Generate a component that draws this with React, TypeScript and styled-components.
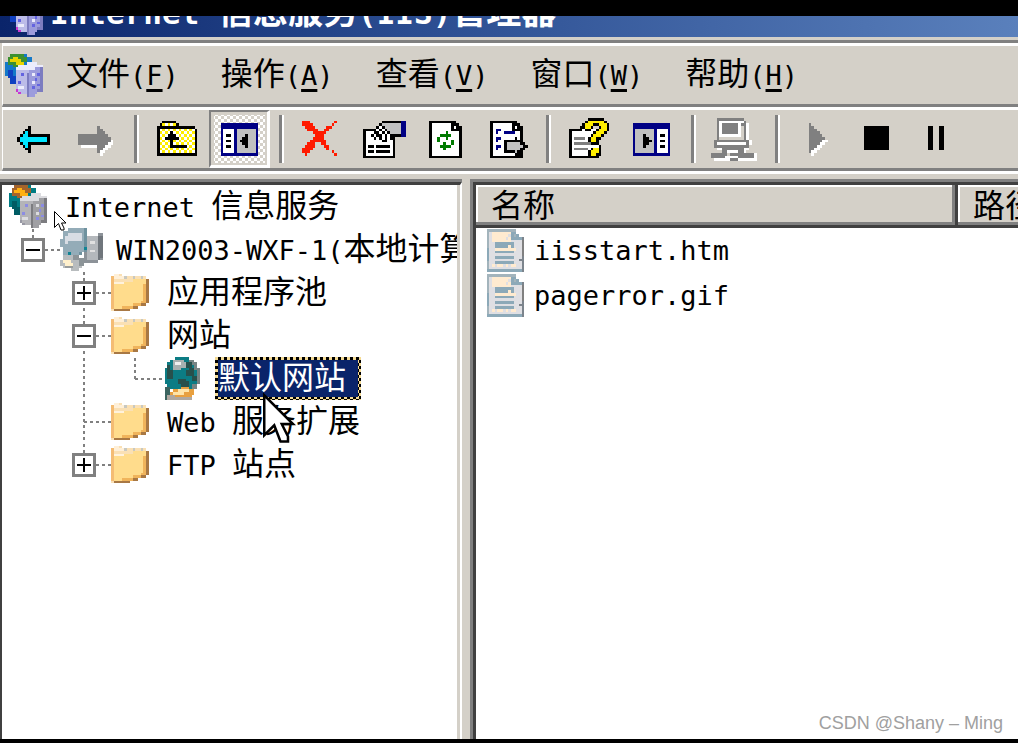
import React from 'react';
import styled, { createGlobalStyle, css } from 'styled-components';

const FACE = '#d4d0c8';
const SHADOW = '#808080';
const DARK = '#404040';
const HAN = '"Noto Sans CJK SC", sans-serif';
const MONO = '"DejaVu Sans Mono", monospace';

const GlobalStyle = createGlobalStyle`
  * { box-sizing: border-box; }
  body { margin: 0; background: #000; color: #000; }
  button { appearance: none; background: none; border: 0; padding: 0; margin: 0; color: inherit; font: inherit; }
`;

/* ---------- drawings ---------- */

const PALETTE: Record<string, string> = {
  K: '#000000', W: '#ffffff', G: '#c0c0c0', g: '#808080', C: '#00e5ff', Y: '#ffee00',
  B: '#000084', R: '#ff1a00', E: '#007a00', b: '#a3b4bc', c: '#ffebd0', l: '#dfdfe3',
  t: '#8ca9b8', d: '#7c848c',
};

type PixelsProps = { rows: string[]; x?: number; y?: number };

const Drawing = styled.svg`
  display: block;
  flex: none;
  width: 43px;
  height: 43px;
  overflow: visible;
`;

const Pixels = ({ rows, x = 0, y = 0 }: PixelsProps) => {
  const runs: React.ReactNode[] = [];
  rows.forEach((row, r) => {
    let c = 0;
    while (c < row.length) {
      let end = c + 1;
      while (end < row.length && row[end] === row[c]) end += 1;
      if (PALETTE[row[c]]) {
        runs.push(<rect key={`${r}-${c}`} x={x + c} y={y + r} width={end - c} height={1} fill={PALETTE[row[c]]} />);
      }
      c = end;
    }
  });
  return (
    <Drawing viewBox="0 0 16 16" shapeRendering="crispEdges" aria-hidden="true">
      {runs}
    </Drawing>
  );
};

const BACK = [
  '....K', '...KK', '..KCK', '.KCCKKKKKKKK', 'KCCCCCCCCCCK',
  'KCCCCCCCCCCK', '.KCCKKKKKKKK', '..KCK', '...KK', '....K',
];
const FORWARD = [
  '.......g', '.......gg', '.......ggg', 'ggggggggggg', 'gggggggggggg', 'ggggggggggggW',
  'gggggggggggWW', '.WWWWWWgggWW', '.......ggWW', '.......gWW', '........W',
];
const FOLDER_UP = [
  '..KKKKK', '.KYWYWYK', 'KKKKKKKKKKKKKK', 'KWYWYWYWYWYWYWK', 'KYWYWKWYWYWYWYK', 'KWYWKKKWYWYWYWK',
  'KYWKKKKKWYWYWYK', 'KWYWYKYWYWYWYWK', 'KYWYWKWYWYWYWYK', 'KWYWYKKKKKKWYWK', 'KYWYWYWYWYWYWYK',
  'KWYWYWYWYWYWYWK', 'KKKKKKKKKKKKKKK',
];
const PANE_LEFT = [
  'BBBBBBBBBBBBBB', 'BBBBBBBBBBBBBB', 'BWWWWBGGGGGGGB', 'BWWWWBGGGGGGGB', 'BWKKWBGGGKGGGB', 'BWWWWBGGKKGGGB',
  'BWKKWBGKKKGGGB', 'BWWWWBGGKKGGGB', 'BWKKWBGGGKGGGB', 'BWWWWBGGGGGGGB', 'BWWWWBGGGGGGGB', 'BBBBBBBBBBBBBB',
];
const PANE_RIGHT = [
  'BBBBBBBBBBBBBB', 'BBBBBBBBBBBBBB', 'BGGGGGGGBWWWWB', 'BGGGGGGGBWWWWB', 'BGGGKGGGBWKKWB', 'BGGGKKGGBWWWWB',
  'BGGGKKKGBWKKWB', 'BGGGKKGGBWWWWB', 'BGGGKGGGBWKKWB', 'BGGGGGGGBWWWWB', 'BGGGGGGGBWWWWB', 'BBBBBBBBBBBBBB',
];
const DELETE = [
  'RRR.........R', 'RRRR.......R', '.RRRR....RR', '..RRRR..RR', '....RRRRR', '.....RRR', '....RRRR',
  '...RRRRRR', '..RRR..RR', '.RRRR...RR', 'RRRR.....R', 'RRR........R', '.R..........R',
];
const PROPERTIES = [
  '.......KKKKKKKBB', '......KGGGGGGGBB', '.....KWKGGGGGGBB', 'KKKKKWKWKGGGGGBB', 'KWWWKKWKWKGGGGBB', 'KWWKWKKWKWKKKKBB',
  'KWWWKWKWKWKK', 'KWWWWWWKKWWK', 'KWWWWWWWWWWK', 'KWKKWKKKKKWK', 'KWWWWWWWWWWK', 'KWKKWKKKKKWK',
  'KWWWWWWWWWWK', 'KKKKKKKKKKKK',
];
const REFRESH = [
  'KKKKKKKKKK', 'KWWWWWWWKKK', 'KWWWWWWWKWKK', 'KWWWWWWWKKKK', 'KWWWWWEWWWWK', 'KWWWEEEEWWWK', 'KWWEWWEWWWWK',
  'KWWEWWWWEWWK', 'KWWWWEWWEWWK', 'KWWWEEEEWWWK', 'KWWWWEWWWWWK', 'KWWWWWWWWWWK', 'KWWWWWWWWWWK', 'KKKKKKKKKKKK',
];
const EXPORT = [
  'KKKKKKKKKK', 'KWWWWWWWKKK', 'KWWWWWWWKWKK', 'KWBBWWWWKKKK', 'KWBWWBBBBWWK', 'KWWWWWWWWWWK', 'KWBBWWWWWKWK',
  'KWBWWKKKKKKK', 'KWWWWKGGGGGKK', 'KWBBWKGGGGGGKK', 'KWBWWKGGGGGKK', 'KWWWWKKKKGKK', 'KWWWWWWWWKKK', 'KKKKKKKKKKKK',
];
const HELP = [
  '.......KKKKKK', '......KYYYYYYK', '.....KYYYKKYYYK', '....KKYYK..KYYK', 'KKKKKWKKWWKYYYK', 'KWWWWWWWWKYYYK',
  'KWWWWWWWKYYYK', 'KWggggWKYYKK', 'KWWWWWWKYYK', 'KWggggggKKK', 'KWWWWWWWWWWK', 'KWgggggWKYYK', 'KWWWWWWKYYYK',
  'KWWWWWWKYYKK', 'KKKKKKKKKKK',
];
const COMPUTER = [
  '..gggggggggg', '..gWWWWWWWWWg', '..gWggggggWggW', '..gWggggggW.gW', '..gWggggggW.gW', '..gWggggggW.gW', '..gWWWWWWWW.gW',
  '..g.........gW', '.gggggggggggggW', '.gWWWWWWWWWWWgW', '.ggggggggggggg', '..WWggggggggWW', '....ggWWWWggW',
  'gggggg.gggggggggW', 'gggggWWWWWggggggW', '.WWWWWWgggWWWWWWW',
];
const PLAY = [
  'g', 'gg', 'ggg', 'gggg', 'ggggg', 'gggggg', 'gggggWW', 'ggggWW', 'gggWW', 'ggWW', 'gWW', '.W',
];
const STOP = Array(9).fill('KKKKKKKKK');
const PAUSE = Array(9).fill('KK..KK');
const PAGE_FILE = [
  'bbbbbbbbbbb', 'blccccccctt', 'blccccccltbt', 'blccccclcttttd', 'blcccccccllllg', 'blltttttttlllg', 'blltttttctlllg',
  'tllccccccccllg', 'tlltttttttlllg', 'tllllllllllllg', 'tlltttttttllld', 'tllllllllllldd', 'blltttttttllld',
  'blclcclclcclld', 'blllllllllllld', 'tttttttttttttd',
];

const ServerIcon = ({ tone = 'gray' }: { tone?: 'gray' | 'blue' }) => {
  const blue = tone === 'blue';
  const top = blue ? '#ececfc' : '#dcdce0';
  const left = blue ? '#bcbce8' : '#b4b4b8';
  const right = blue ? '#9c9cdc' : '#a0a0a4';
  const edge = blue ? '#7c7cc0' : '#7c7c80';
  return (
    <Drawing viewBox="0 0 16 16" shapeRendering="crispEdges" aria-hidden="true">
      <path d="M1 1H2V0H8V1H10V4H5V8H4V11H2V9H1V8H0V3H1Z" fill={blue ? '#1478c8' : '#007c84'} />
      <path d="M1 6H3V8H4V11H2V9H1Z" fill={blue ? '#1040c0' : '#005c64'} />
      <path d="M1 1H2V0H7V1H8V3H7V4H5V5H3V4H1Z" fill={blue ? '#3c9030' : '#a4642c'} />
      <path d="M3 1H5V2H6V3H7V4H4V3H2V2H3Z" fill={blue ? '#e8d400' : '#ffb010'} />
      <path d="M4 6H9V16H8V15H6V14H5V13H4Z" fill={left} />
      <path d="M9 5H14V14H12V15H11V16H9Z" fill={right} />
      <path d="M13 5H14V14H12V13H13Z" fill={edge} />
      <path d="M5 4H8V3H12V4H14V5H11V6H4V5H5Z" fill={top} />
      <path d="M8 7H9V16H8Z" fill={edge} />
      <path d="M12 7H13V8H12ZM11 9H12V10H11ZM12 11H13V12H12ZM10 12H11V13H10ZM6 7H7V8H6ZM5 10H6V11H5Z" fill={blue ? '#6464e0' : '#8c8ce4'} />
      <path d="M10 7H11V8H10ZM10 10H11V11H10ZM5 12H7V13H5Z" fill={top} />
      <path d="M4 13H5V14H6V15H5V14H4Z" fill={blue ? '#c838d0' : '#9898a4'} />
    </Drawing>
  );
};

const ComputerIcon = () => (
  <Drawing viewBox="0 0 16 16" shapeRendering="crispEdges" aria-hidden="true">
    <path d="M10 3H14V2H16V12H14V13H9V4Z" fill="#8c9298" />
    <path d="M10 3H14V12H10Z" fill="#b4b8bc" />
    <path d="M11 5H13V6H11ZM11 8H13V9H11Z" fill="#e0e0e0" />
    <path d="M14 3H16V11H15V12H14Z" fill="#70767c" />
    <path d="M1 1H3V0H10V9H8V10H1V7H0V4H1Z" fill="#94acb8" />
    <path d="M9 0H10V9H8V10H7V9H9Z" fill="#6f929f" />
    <path d="M2 3H3V2H8V5H3V6H2Z" fill="#d8dde4" />
    <path d="M3 9H4V10H3ZM9 7H10V8H9Z" fill="#108494" />
    <path d="M1 10H5V11H8V15H7V16H4V15H1V14H0V12H1Z" fill="#b8bcbe" />
    <path d="M1 12H4V13H5V14H2V13H1Z" fill="#fff0cc" />
    <path d="M5 10H7V11H9V14H7V12H5Z" fill="#8c9498" />
    <path d="M2 14H5V15H2Z" fill="#989c9c" />
  </Drawing>
);

const FolderIcon = () => (
  <Drawing viewBox="0 0 16 16" shapeRendering="crispEdges" aria-hidden="true">
    <path d="M1 1H4V2H13V3H14V12H12V13H10V14H7V15H0V2H1Z" fill="#fae0b4" />
    <path d="M1 1H3V2H5V3H1Z" fill="#fff0d8" />
    <path d="M5 2H6V3H5ZM8 2H9V3H8ZM11 2H12V3H11Z" fill="#c8c8c0" />
    <path d="M1 5H5V4H8V3H13V11H11V12H8V13H6V14H1Z" fill="#ffdc8c" />
    <path d="M1 4H5V5H1Z" fill="#fff2dc" />
    <path d="M0 2H1V14H0Z" fill="#f4bc74" />
    <path d="M13 3H14V12H13ZM11 12H13V13H10V14H7V15H1V14H7V13H11Z" fill="#a87844" />
    <path d="M11 11H13V12H11ZM8 12H11V13H8ZM4 13H8V14H4ZM12 5H13V11H12Z" fill="#f0b45c" />
  </Drawing>
);

const GlobeIcon = () => (
  <Drawing viewBox="0 0 16 16" shapeRendering="crispEdges" aria-hidden="true">
    <path d="M5 0H10V1H12V2H13V4H14V10H13V12H12V13H4V12H2V10H1V4H2V2H3V1H5Z" fill="#0c7c84" />
    <path d="M10 1H12V2H13V4H14V10H13V12H11V10H13V5H12V3H10Z" fill="#788484" />
    <path d="M9 2H11V4H12V7H13V9H11V7H9V5H10V4H9ZM2 3H3V5H4V8H2ZM6 8H9V9H10V11H7V10H6Z" fill="#28504c" />
    <path d="M4 1H8V2H9V4H7V5H4Z" fill="#a8b0b0" />
    <path d="M5 2H7V3H5Z" fill="#f0f0f0" />
    <path d="M1 11H3V13H5V16H1Z" fill="#3c6460" />
    <path d="M4 12H7V11H10V12H12V14H11V15H9V16H4V15H3V13H4Z" fill="#e8a040" />
    <path d="M4 13H6V12H10V13H8V14H4Z" fill="#ffe4a8" />
    <path d="M2 14H5V15H11V16H2Z" fill="#b0a8a0" />
  </Drawing>
);

/* ---------- text ---------- */

const HanText = styled.span`
  font-family: ${HAN};
`;

const MonoText = styled.span<{ $size?: number }>`
  font-family: ${MONO};
  font-size: ${({ $size }) => $size ?? 27}px;
`;

/* Chinese glyphs take a full cell and Latin glyphs half of one. */
const Mixed = ({ children, size }: { children: string; size?: number }) => (
  <>
    {children.split(/([\u4e00-\u9fff]+)/).filter(Boolean).map((part, i) =>
      /[\u4e00-\u9fff]/.test(part)
        ? <HanText key={i}>{part}</HanText>
        : <MonoText key={i} $size={size}>{part}</MonoText>)}
  </>
);

const bodyText = css`
  font-family: ${HAN};
  font-size: 32px;
  line-height: 31px;
  white-space: pre;
`;

/* ---------- window ---------- */

const Window = styled.div`
  position: relative;
  display: flex;
  flex-direction: column;
  min-height: 100vh;
  padding: 16px 0 4px;
  overflow: hidden;
  background: linear-gradient(#000, #000) bottom / 100% 4px no-repeat, linear-gradient(#000, #000) top / 100% 16px no-repeat, ${FACE};
`;

const TitleBar = styled.header`
  display: flex;
  align-items: flex-end;
  height: 21px;
  padding: 0 5px 2px;
  overflow: hidden;
  color: #fff;
  background: linear-gradient(90deg, #0a246a, #2a4c90 40%, #5a80bc);
`;

const Title = styled.h1`
  margin: 0;
  padding: 0 0 6px 2px;
  font: bold 35px/31px ${HAN};
  white-space: pre;
`;

const Bars = styled.div`
  margin-top: 3px;
  border-top: 3px solid ${SHADOW};
`;

const Bar = styled.div`
  display: flex;
  align-items: center;
  border-top: 3px solid #fff;
  border-bottom: 3px solid ${SHADOW};
  border-left: 1px solid #fff;
  margin-left: 2px;
`;

const MenuBar = styled(Bar).attrs({ as: 'nav' })`
  height: 64px;
  gap: 42px;
  padding-left: 2px;
`;

const MenuButton = styled.button`
  ${bodyText}
  height: 43px;
  padding-bottom: 4px;
`;

const MenuIcon = styled.span`
  margin-right: -24px;
`;

const Mnemonic = styled.u`
  text-decoration-thickness: 3px;
  text-underline-offset: 4px;
`;

const ToolBar = styled(Bar).attrs({ role: 'toolbar' })`
  height: 64px;
`;

const ToolButton = styled.button<{ $pressed?: boolean }>`
  display: flex;
  flex: none;
  align-items: center;
  justify-content: center;
  width: 61px;
  height: 58px;
  ${({ $pressed }) => $pressed && css`
    border: 2px solid ${SHADOW};
    border-right: 3px solid #fff;
    border-bottom: 3px solid #fff;
    padding: 1px 0 0 1px;
    background: repeating-conic-gradient(#fff 0 25%, ${FACE} 0 50%) 0 0 / 6px 6px content-box;
    box-shadow: inset 3px 3px 0 ${FACE}, inset -2px -2px 0 ${FACE};
  `}
`;

const Separator = styled.span`
  flex: none;
  width: 5px;
  height: 48px;
  margin: 0 9px;
  border-left: 3px solid ${SHADOW};
  border-right: 2px solid #fff;
`;

const Panes = styled.main`
  display: flex;
  flex: 1;
  gap: 7px;
  padding-top: 5px;
  border-top: 3px solid #fff;
`;

const Pane = styled.section`
  position: relative;
  overflow: hidden;
  background: #fff;
  border-top: 3px solid ${DARK};
  box-shadow: 0 -3px 0 ${SHADOW};
  margin-top: 3px;
`;

const TreePane = styled(Pane)`
  flex: 0 0 462px;
  border-left: 2px solid ${DARK};
  border-right: 2px solid #fff;

  &::after {
    content: '';
    position: absolute;
    inset: 0 0 0 auto;
    width: 3px;
    background: ${FACE};
  }
`;

const ListPane = styled(Pane)`
  flex: 1;
  min-width: 0;
  border-left: 3px solid ${DARK};
  box-shadow: -3px 0 0 ${SHADOW}, 0 -3px 0 ${SHADOW}, -3px -3px 0 ${SHADOW};
  margin-left: 4px;
`;

/* ---------- tree ---------- */

const Tree = styled.ul`
  margin: 0;
  padding: 0 0 0 7px;
  list-style: none;
`;

const TreeRow = styled.li`
  display: flex;
  height: 43px;
`;

const GuideCell = styled.span`
  position: relative;
  display: flex;
  flex: none;
  align-items: center;
  width: 51px;
  padding-left: 12px;
`;

const GuideLines = styled.svg`
  position: absolute;
  inset: 0;
  width: 51px;
  height: 43px;
`;

const Expander = styled.button`
  position: relative;
  width: 24px;
  height: 24px;
  background: #fff;

  svg { display: block; width: 24px; height: 24px; }
`;

const TreeLabel = styled.button<{ $selected?: boolean }>`
  ${bodyText}
  flex: none;
  height: 43px;
  margin-left: 10px;
  padding: 0 12px 6px 0;
  border: 3px solid transparent;
  ${({ $selected }) => $selected && css`
    color: #fff;
    background:
      linear-gradient(#0a246a, #0a246a) padding-box,
      repeating-conic-gradient(#000 0 25%, #f5db95 0 50%) 0 0 / 6px 6px border-box;
  `}
`;

type Guide = 'none' | 'line' | 'tee' | 'end';
type Node = { label: string; icon: React.ReactNode; guides: Guide[]; open?: boolean; selected?: boolean };

const NODES: Node[] = [
  { label: 'Internet 信息服务', icon: <ServerIcon />, guides: [] },
  { label: 'WIN2003-WXF-1(本地计算机)', icon: <ComputerIcon />, guides: ['end'], open: true },
  { label: '应用程序池', icon: <FolderIcon />, guides: ['none', 'tee'], open: false },
  { label: '网站', icon: <FolderIcon />, guides: ['none', 'tee'], open: true },
  { label: '默认网站', icon: <GlobeIcon />, guides: ['none', 'line', 'end'], selected: true },
  { label: 'Web 服务扩展', icon: <FolderIcon />, guides: ['none', 'tee'] },
  { label: 'FTP 站点', icon: <FolderIcon />, guides: ['none', 'end'], open: false },
];

const GuideMark = ({ kind, open }: { kind: Guide; open?: boolean }) => (
  <GuideCell>
    {kind !== 'none' && (
      <GuideLines viewBox="0 0 51 43" stroke="#808080" strokeWidth={2} strokeDasharray="3 3" aria-hidden="true">
        <path d={kind === 'end' ? 'M24 1V22' : 'M24 1V43'} />
        {kind !== 'line' && <path d="M24 22H51" />}
      </GuideLines>
    )}
    {open !== undefined && (
      <Expander aria-label={open ? '折叠' : '展开'} aria-expanded={open}>
        <svg viewBox="0 0 9 9" shapeRendering="crispEdges" aria-hidden="true">
          <path d="M0 0H9V9H0ZM1 1V8H8V1Z" fill="#808080" fillRule="evenodd" />
          <path d={open ? 'M2 4H7V5H2Z' : 'M2 4H4V2H5V4H7V5H5V7H4V5H2Z'} fill="#000" />
        </svg>
      </Expander>
    )}
  </GuideCell>
);

/* ---------- list ---------- */

const FileTable = styled.table`
  width: 100%;
  table-layout: fixed;
  border-collapse: collapse;
`;

const HeadCell = styled.th<{ $width?: number }>`
  ${bodyText}
  width: ${({ $width }) => ($width ? `${$width}px` : 'auto')};
  height: 43px;
  padding: 0 0 6px 15px;
  overflow: hidden;
  font-weight: normal;
  text-align: left;
  background: ${FACE};
  box-shadow: inset -3px -3px 0 ${DARK}, inset -6px -6px 0 ${SHADOW}, inset 2px 2px 0 #fff;

  &:last-child {
    box-shadow: inset 0 -3px 0 ${DARK}, inset 0 -6px 0 ${SHADOW}, inset 2px 2px 0 #fff;
  }
`;

const FileCell = styled.td`
  height: 45px;
  padding: 0 0 0 8px;
`;

const FileName = styled.button`
  ${bodyText}
  display: flex;
  align-items: center;
  gap: 7px;
`;

/* ---------- overlays ---------- */

const Pointer = styled.svg<{ $x: number; $y: number; $w: number; $h: number }>`
  position: absolute;
  left: ${({ $x }) => $x}px;
  top: ${({ $y }) => $y}px;
  width: ${({ $w }) => $w}px;
  height: ${({ $h }) => $h}px;
  overflow: visible;
  pointer-events: none;
`;

const Watermark = styled.p`
  position: absolute;
  right: 15px;
  bottom: 8px;
  margin: 0;
  color: #a0a0a0;
  font: 18px/24px "Liberation Sans", sans-serif;
`;

const ArrowShape = () => (
  <path d="M.5 .5V16.5L4.500 12.500L7 19H10V17L7.500 12H12Z" fill="#fff" stroke="#000" />
);

const MENUS = [['文件', 'F'], ['操作', 'A'], ['查看', 'V'], ['窗口', 'W'], ['帮助', 'H']];

type Tool = { name: string; rows: string[]; x: number; y: number; pressed?: boolean };
const TOOL_GROUPS: Tool[][] = [
  [{ name: '后退', rows: BACK, x: 2, y: 3 }, { name: '前进', rows: FORWARD, x: 2, y: 3 }],
  [{ name: '向上', rows: FOLDER_UP, x: 0, y: 1 }, { name: '显示/隐藏控制台树', rows: PANE_LEFT, x: 1, y: 2, pressed: true }],
  [
    { name: '删除', rows: DELETE, x: 0, y: 1 }, { name: '属性', rows: PROPERTIES, x: 0, y: 1 },
    { name: '刷新', rows: REFRESH, x: 2, y: 1 }, { name: '导出列表', rows: EXPORT, x: 2, y: 1 },
  ],
  [{ name: '帮助', rows: HELP, x: 0, y: 0 }, { name: '显示/隐藏操作窗格', rows: PANE_RIGHT, x: 1, y: 2 }],
  [{ name: '连接', rows: COMPUTER, x: -1, y: 0 }],
  [{ name: '启动', rows: PLAY, x: 4, y: 2 }, { name: '停止', rows: STOP, x: 2, y: 3 }, { name: '暂停', rows: PAUSE, x: 3, y: 3 }],
];

const App = () => (
  <>
    <GlobalStyle />
    <Window>
      <TitleBar>
        <ServerIcon tone="blue" />
        <Title><Mixed size={31}>Internet 信息服务(IIS)管理器</Mixed></Title>
      </TitleBar>
      <Bars>
        <MenuBar>
          <MenuIcon><ServerIcon tone="blue" /></MenuIcon>
          {MENUS.map(([label, key]) => (
            <MenuButton key={key}>
              <HanText>{label}</HanText>
              <MonoText>(<Mnemonic>{key}</Mnemonic>)</MonoText>
            </MenuButton>
          ))}
        </MenuBar>
        <ToolBar>
          {TOOL_GROUPS.map((group, i) => (
            <React.Fragment key={i}>
              {i > 0 && <Separator />}
              {group.map((tool) => (
                <ToolButton key={tool.name} aria-label={tool.name} $pressed={tool.pressed}>
                  <Pixels rows={tool.rows} x={tool.x} y={tool.y} />
                </ToolButton>
              ))}
            </React.Fragment>
          ))}
        </ToolBar>
      </Bars>
      <Panes>
        <TreePane>
          <Tree>
            {NODES.map((node) => (
              <TreeRow key={node.label}>
                {node.guides.map((kind, i) => (
                  <GuideMark key={i} kind={kind} open={i === node.guides.length - 1 ? node.open : undefined} />
                ))}
                {node.icon}
                <TreeLabel $selected={node.selected}><Mixed>{node.label}</Mixed></TreeLabel>
              </TreeRow>
            ))}
          </Tree>
          <Pointer $x={52} $y={26} $w={13} $h={21} viewBox="0 0 13 21" aria-hidden="true"><ArrowShape /></Pointer>
          <Pointer $x={261} $y={207} $w={30} $h={54} viewBox="0 0 12 20" aria-hidden="true"><ArrowShape /></Pointer>
        </TreePane>
        <ListPane>
          <FileTable>
            <thead>
              <tr>
                <HeadCell $width={482}>名称</HeadCell>
                <HeadCell>路径</HeadCell>
              </tr>
            </thead>
            <tbody>
              {['iisstart.htm', 'pagerror.gif'].map((name) => (
                <tr key={name}>
                  <FileCell colSpan={2}>
                    <FileName><Pixels rows={PAGE_FILE} x={1} /><MonoText>{name}</MonoText></FileName>
                  </FileCell>
                </tr>
              ))}
            </tbody>
          </FileTable>
        </ListPane>
      </Panes>
      <Watermark>CSDN @Shany – Ming</Watermark>
    </Window>
  </>
);

export default App;
